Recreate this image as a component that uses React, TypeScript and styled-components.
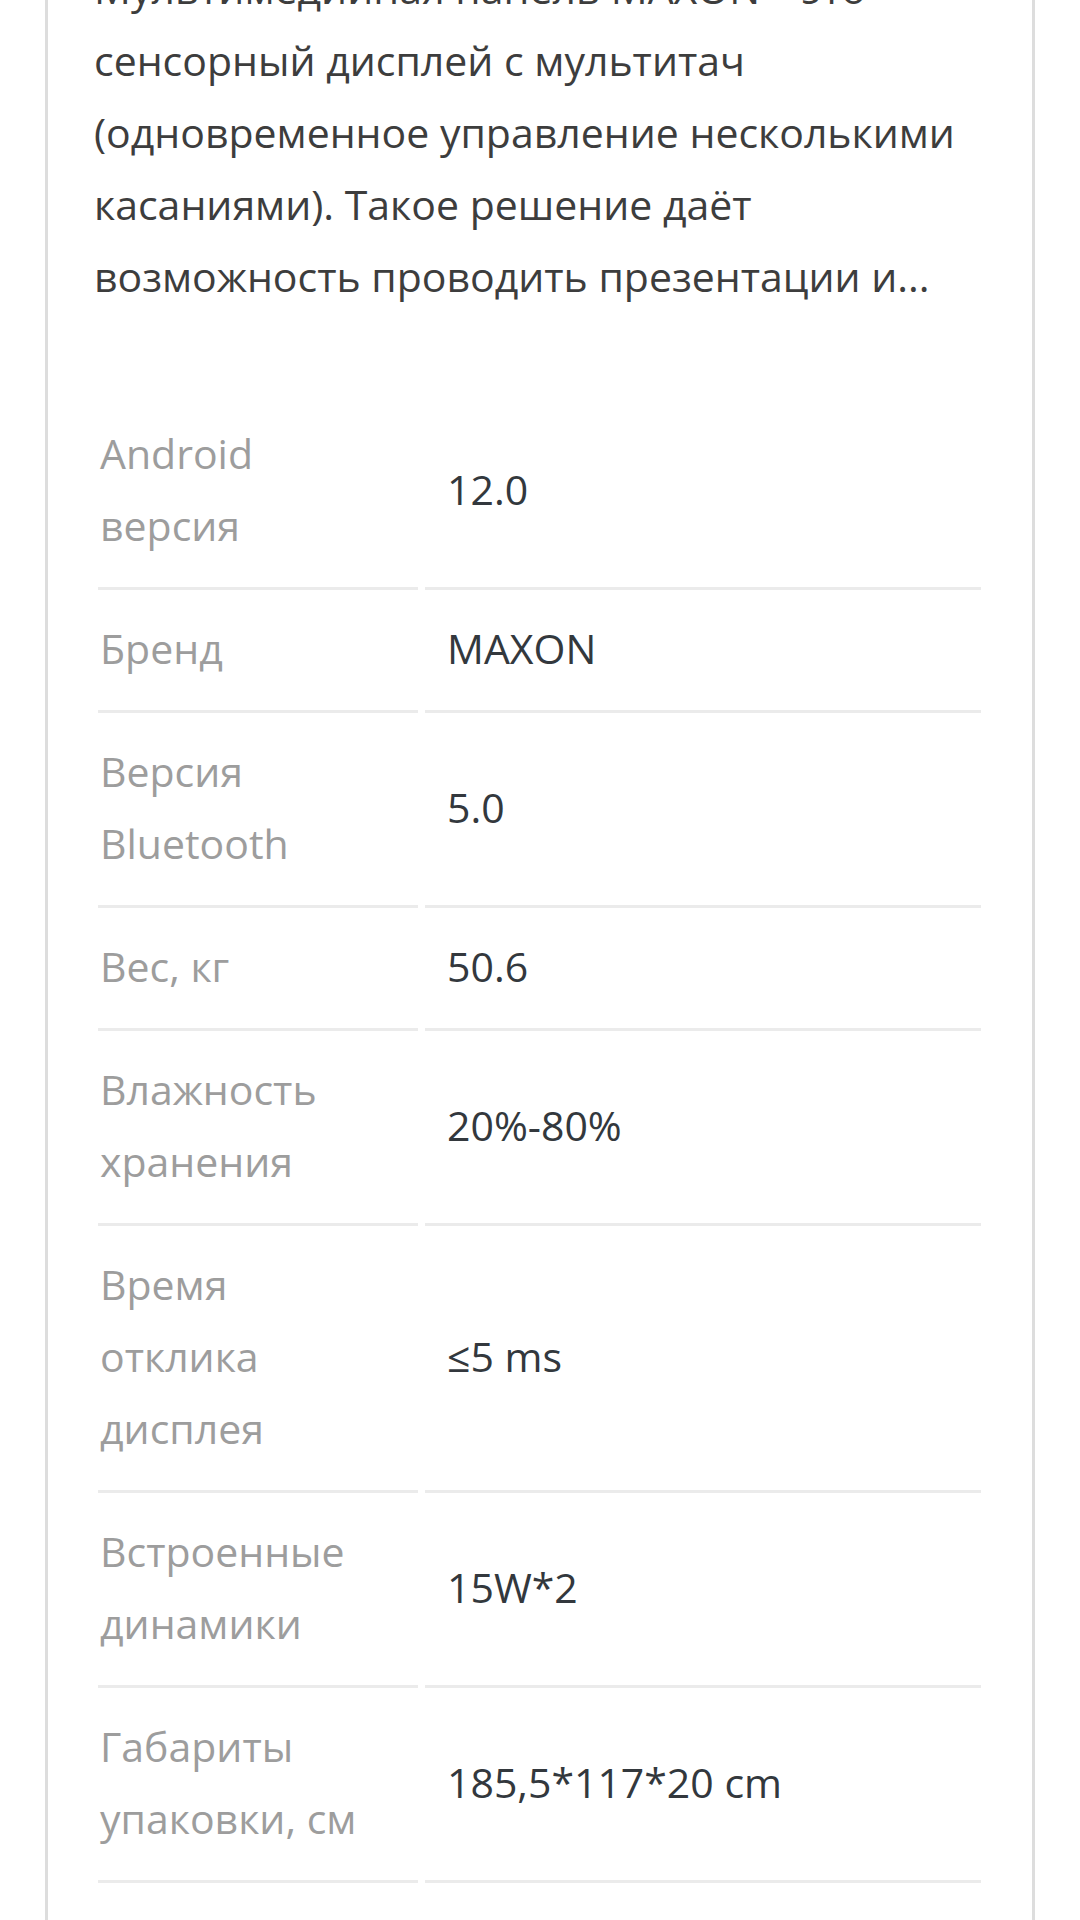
import styled, { createGlobalStyle } from 'styled-components';

const GlobalStyle = createGlobalStyle`
  html, body {
    margin: 0;
    padding: 0;
    background: #ffffff;
    overflow: hidden;
  }
  body {
    font-family: 'Open Sans', 'Noto Sans', 'Liberation Sans', sans-serif;
  }
`;

const Page = styled.div`
  width: 1080px;
  height: 1920px;
  overflow: hidden;
  background: #ffffff;
`;

const Card = styled.section`
  box-sizing: border-box;
  width: 990px;
  margin: -87px 0 0 45px;
  padding: 36px 43px 60px 43px;
  border: 3px solid #dddddd;
  background: #ffffff;
`;

const Description = styled.p`
  margin: 0 0 83px 3px;
  width: 884px;
  font-size: 41px;
  line-height: 72px;
  color: #3d3d3d;
`;

const SpecTable = styled.table`
  border-collapse: separate;
  border-spacing: 7px 0;
  width: 897px;
  table-layout: fixed;
`;

const Cell = styled.td<{ $label?: boolean }>`
  padding: 22px ${(p) => (p.$label ? '38px' : '0')} 26px
    ${(p) => (p.$label ? '2px' : '22px')};
  border-bottom: 3px solid #ebebeb;
  vertical-align: middle;
  font-size: 41px;
  line-height: 72px;
  color: ${(p) => (p.$label ? '#9d9d9d' : '#33383d')};
`;

const specs: [string, string][] = [
  ['Android версия', '12.0'],
  ['Бренд', 'MAXON'],
  ['Версия Bluetooth', '5.0'],
  ['Вес, кг', '50.6'],
  ['Влажность хранения', '20%-80%'],
  ['Время отклика дисплея', '≤5 ms'],
  ['Встроенные динамики', '15W*2'],
  ['Габариты упаковки, см', '185,5*117*20 cm'],
];

export default function App() {
  return (
    <Page>
      <GlobalStyle />
      <Card>
        <Description>
          Мультимедийная панель MAXON – это сенсорный дисплей с мультитач
          (одновременное управление несколькими касаниями). Такое решение даёт
          возможность проводить презентации и...
        </Description>
        <SpecTable>
          <colgroup>
            <col style={{ width: 320 }} />
            <col style={{ width: 556 }} />
          </colgroup>
          <tbody>
            {specs.map(([label, value]) => (
              <tr key={label}>
                <Cell $label>{label}</Cell>
                <Cell>{value}</Cell>
              </tr>
            ))}
          </tbody>
        </SpecTable>
      </Card>
    </Page>
  );
}
